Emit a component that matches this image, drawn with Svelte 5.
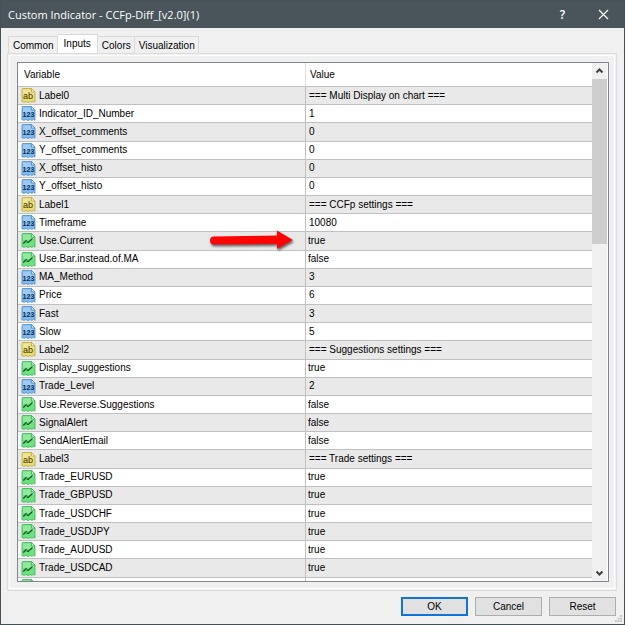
<script lang="ts">
  type Kind = 'text' | 'int' | 'bool';

  interface Input {
    kind: Kind;
    name: string;
    value: string;
    marked?: boolean;
  }

  const tabs = ['Common', 'Inputs', 'Colors', 'Visualization'];
  let activeTab = $state('Inputs');

  const inputs: Input[] = [
    { kind: 'text', name: 'Label0', value: '=== Multi Display on chart ===' },
    { kind: 'int', name: 'Indicator_ID_Number', value: '1' },
    { kind: 'int', name: 'X_offset_comments', value: '0' },
    { kind: 'int', name: 'Y_offset_comments', value: '0' },
    { kind: 'int', name: 'X_offset_histo', value: '0' },
    { kind: 'int', name: 'Y_offset_histo', value: '0' },
    { kind: 'text', name: 'Label1', value: '=== CCFp settings ===' },
    { kind: 'int', name: 'Timeframe', value: '10080' },
    { kind: 'bool', name: 'Use.Current', value: 'true', marked: true },
    { kind: 'bool', name: 'Use.Bar.instead.of.MA', value: 'false' },
    { kind: 'int', name: 'MA_Method', value: '3' },
    { kind: 'int', name: 'Price', value: '6' },
    { kind: 'int', name: 'Fast', value: '3' },
    { kind: 'int', name: 'Slow', value: '5' },
    { kind: 'text', name: 'Label2', value: '=== Suggestions settings ===' },
    { kind: 'bool', name: 'Display_suggestions', value: 'true' },
    { kind: 'int', name: 'Trade_Level', value: '2' },
    { kind: 'bool', name: 'Use.Reverse.Suggestions', value: 'false' },
    { kind: 'bool', name: 'SignalAlert', value: 'false' },
    { kind: 'bool', name: 'SendAlertEmail', value: 'false' },
    { kind: 'text', name: 'Label3', value: '=== Trade settings ===' },
    { kind: 'bool', name: 'Trade_EURUSD', value: 'true' },
    { kind: 'bool', name: 'Trade_GBPUSD', value: 'true' },
    { kind: 'bool', name: 'Trade_USDCHF', value: 'true' },
    { kind: 'bool', name: 'Trade_USDJPY', value: 'true' },
    { kind: 'bool', name: 'Trade_AUDUSD', value: 'true' },
    { kind: 'bool', name: 'Trade_USDCAD', value: 'true' },
    { kind: 'bool', name: '', value: '' }
  ];
</script>

{#snippet typeIcon(kind: Kind)}
  <svg class="type-icon {kind}" viewBox="0 0 15 15" aria-hidden="true">
    <path class="sheet" d="M1.5 .5H10.5L14 4V14.2L12.5 13.2L11 14.4L9.2 13.6L7 14.5L5 13.5L3 14.3L.8 13.6L1 12V2Z" />
    <path class="shine" d="M2 1.5H9.5V4.5H13V7H2Z" />
    <path class="fold" d="M10.5 .5V4H14Z" />
    {#if kind === 'text'}
      <text x="2" y="10.5" font-size="9">ab</text>
    {:else if kind === 'int'}
      <text x="1.6" y="10.5" font-size="7" font-weight="700">123</text>
    {:else}
      <path class="line" d="M2.3 10.5L5.6 7.2M5.8 9.2H8M8 8.7L11.5 5.6" />
    {/if}
  </svg>
{/snippet}

<div class="dialog">
  <header class="titlebar">
    <h1>Custom Indicator - CCFp-Diff_[v2.0](1)</h1>
    <button class="caption" aria-label="Help">?</button>
    <button class="caption" aria-label="Close">
      <svg width="11" height="11" viewBox="0 0 11 11"><path d="M1 1L10 10M10 1L1 10" /></svg>
    </button>
  </header>

  <div class="tabs" role="tablist">
    {#each tabs as tab}
      <button
        class="tab"
        class:active={tab === activeTab}
        role="tab"
        aria-selected={tab === activeTab}
        onclick={() => (activeTab = tab)}>{tab}</button>
    {/each}
  </div>

  <div class="panel">
    <div class="list">
      <div class="rows">
        <table>
          <thead>
            <tr><th>Variable</th><th>Value</th></tr>
          </thead>
          <tbody>
            {#each inputs as input}
              <tr>
                <td>
                  <div class="cell">{@render typeIcon(input.kind)}<span>{input.name}</span></div>
                  {#if input.marked}
                    <svg class="arrow" viewBox="0 0 88 24" aria-hidden="true">
                      <path d="M5 7.5L68 6.5V1.5L84 11L68 20V15L5 15.5A4 4 0 0 1 5 7.5Z" />
                    </svg>
                  {/if}
                </td>
                <td class="value {input.kind}">{input.value}</td>
              </tr>
            {/each}
          </tbody>
        </table>
      </div>
      <div class="scrollbar">
        <svg viewBox="0 0 15 16"><path d="M4.5 9.5L7.5 6.5L10.5 9.5" /></svg>
        <div class="track"><div class="thumb"></div></div>
        <svg viewBox="0 0 15 16"><path d="M4.5 6.5L7.5 9.5L10.5 6.5" /></svg>
      </div>
    </div>
  </div>

  <footer>
    <button class="action default">OK</button>
    <button class="action">Cancel</button>
    <button class="action">Reset</button>
  </footer>
  <svg class="grip" viewBox="0 0 8 8" aria-hidden="true">
    <path d="M6 0h2v2h-2zM3 3h2v2h-2zM6 3h2v2h-2zM0 6h2v2h-2zM3 6h2v2h-2zM6 6h2v2h-2z" />
  </svg>
</div>

<style>
  :global(body) {
    margin: 0;
  }

  .dialog {
    position: relative;
    display: flex;
    flex-direction: column;
    box-sizing: border-box;
    height: 100vh;
    border: 1px solid #465157;
    background: #f0f0f0;
    color: #000;
    font-family: 'Liberation Sans', Arial, sans-serif;
    font-size: 10px;
    line-height: 12px;
  }

  button {
    margin: 0;
    padding: 0;
    border: 0;
    color: inherit;
    font: inherit;
  }

  .titlebar {
    display: flex;
    align-items: center;
    flex: none;
    height: 27px;
    padding-left: 7px;
    background: #4a555b;
    color: #fff;
    font-family: 'Open Sans', 'Segoe UI', sans-serif;
  }

  h1 {
    flex: 1;
    margin: 0;
    font-size: 11px;
    font-weight: 400;
  }

  .caption {
    display: grid;
    place-items: center;
    width: 41px;
    height: 27px;
    background: none;
    font-size: 12px;
    font-weight: 600;
  }

  .caption path {
    fill: none;
    stroke: #fff;
    stroke-width: 1.2;
  }

  .tabs {
    display: flex;
    align-items: flex-end;
    flex: none;
    height: 19px;
    padding: 6px 7px 0;
  }

  .tab {
    height: 17px;
    padding: 1px 3px 0 4px;
    border: 1px solid #d9d9d9;
    border-bottom: 0;
    background: #f0f0f0;
  }

  .tab + .tab {
    border-left: 0;
  }

  .tab.active {
    height: 19px;
    padding: 0 6px;
    background: #fff;
  }

  .panel {
    display: flex;
    flex: 1;
    min-height: 0;
    margin: 0 7px 0 6px;
    padding: 6px;
    border: 1px solid #dcdcdc;
    outline: 1px solid #fff;
    outline-offset: -3px;
  }

  .list {
    display: flex;
    flex: 1;
    min-width: 0;
    margin: 2px 1px 2px 3px;
    border: 1px solid #82878f;
    background: #fff;
  }

  .rows {
    flex: 1;
    min-width: 0;
    overflow: hidden;
  }

  table {
    width: 100%;
    height: 533px;
    border-collapse: separate;
    border-spacing: 0;
    table-layout: fixed;
  }

  th,
  td {
    box-sizing: border-box;
    padding: 0 3px;
    border-bottom: 1px solid #c0c0c0;
    text-align: left;
    white-space: nowrap;
  }

  th {
    height: 24px;
    padding: 0 6px;
    font-weight: 400;
  }

  th + th,
  td + td {
    border-left: 1px solid #c0c0c0;
  }

  th + th {
    padding: 0 4px;
    border-left-color: #dedede;
  }

  tbody tr:nth-child(odd) {
    background: #e9e9e9;
  }

  td {
    position: relative;
    height: 18px;
  }

  .value.bool {
    padding-left: 2px;
  }

  .cell {
    display: flex;
    align-items: center;
    gap: 3px;
  }

  .type-icon {
    flex: none;
    width: 15px;
    height: 15px;
    font-family: 'Liberation Sans', Arial, sans-serif;
  }

  .type-icon .shine {
    fill: #fff;
    opacity: 0.25;
  }

  .text .sheet {
    fill: #e9dc72;
    stroke: #b9a83d;
  }

  .text .fold {
    fill: #fbf5bd;
    stroke: #b9a83d;
  }

  .text text {
    fill: #3b340a;
  }

  .int .sheet {
    fill: #7fb9ee;
    stroke: #4d8bc7;
  }

  .int .fold {
    fill: #cfe6fb;
    stroke: #4d8bc7;
  }

  .int text {
    fill: #0d3054;
  }

  .bool .sheet {
    fill: #6fe07f;
    stroke: #38b355;
  }

  .bool .fold {
    fill: #c8f7cc;
    stroke: #38b355;
  }

  .bool .line {
    fill: none;
    stroke: #115a20;
    stroke-width: 1.4;
  }

  .type-icon .sheet,
  .type-icon .fold {
    stroke-width: 0.8;
  }

  .arrow {
    position: absolute;
    top: -3px;
    right: 8px;
    width: 88px;
    height: 24px;
    fill: #fb0505;
    filter: drop-shadow(1px 2px 1px rgb(0 0 0 / 55%));
  }

  .scrollbar {
    display: flex;
    flex-direction: column;
    width: 15px;
    margin-right: 1px;
    background: #f0f0f0;
  }

  .scrollbar svg {
    flex: none;
    width: 15px;
    height: 16px;
    fill: none;
    stroke: #404040;
    stroke-width: 2;
  }

  .track {
    flex: 1;
  }

  .thumb {
    height: 34%;
    background: #cdcdcd;
  }

  footer {
    display: flex;
    justify-content: flex-end;
    flex: none;
    gap: 7px;
    padding: 6px 8px 8px;
  }

  .action {
    box-sizing: border-box;
    width: 67px;
    height: 19px;
    border: 1px solid #adadad;
    background: #e1e1e1;
  }

  .action.default {
    border: 2px solid #0f74d6;
  }

  .grip {
    position: absolute;
    right: 2px;
    bottom: 2px;
    width: 7px;
    height: 7px;
    fill: #bdbdbd;
  }
</style>
